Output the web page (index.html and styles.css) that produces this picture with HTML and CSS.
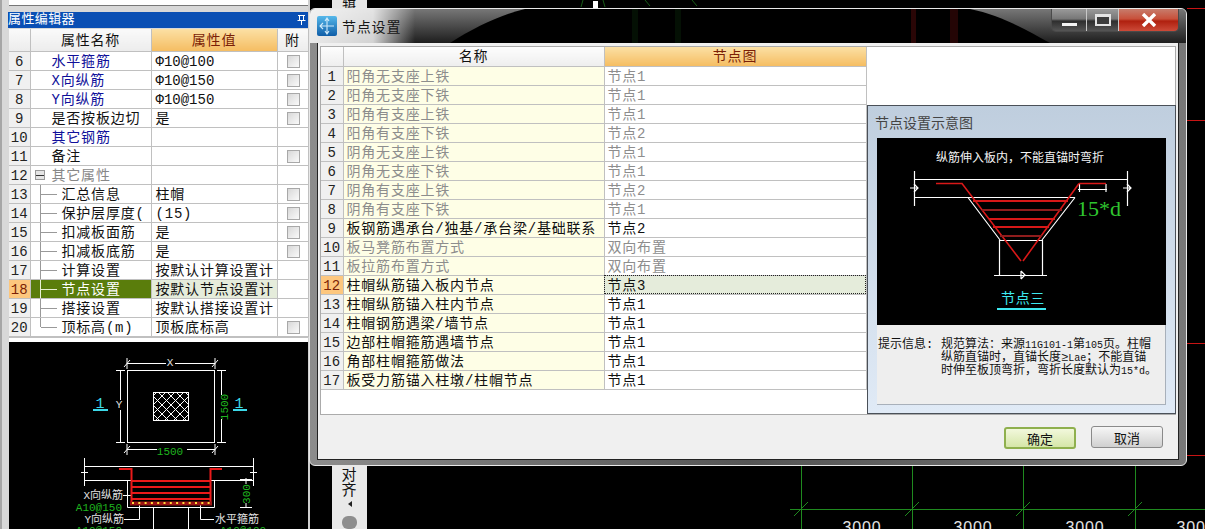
FILE: index.html
```html
<!DOCTYPE html>
<html lang="zh-CN">
<head>
    <meta charset="UTF-8">
    <title>节点设置</title>
    <link rel="stylesheet" href="styles.css">
</head>
<body>
    <!-- CAD canvas behind everything -->
    <svg class="canvas" width="1205" height="529" viewBox="0 0 1205 529">
        <g stroke="#1f8a1f" fill="none">
            <path d="M801.5 466V529M912.5 466V529M1023.5 466V529M1135.5 466V529M790 509.5H1205"/>
            <path d="M794 516L808 502M905 516L919 502M1016 516L1030 502M1128 516L1142 502"/>
            <path d="M583 0L581 7M603 0L605 7M645 0L650 6M692 0L697 6" stroke="#175c17"/>
        </g>
        <g stroke="#c81414">
            <path d="M1187 8.5H1205M1187 120.5H1205M1187 343.5H1205M1187 455.5H1205"/>
        </g>
        <g class="canvas-dim">
            <text x="862" y="533">3000</text>
            <text x="973" y="533">3000</text>
            <text x="1085" y="533">3000</text>
            <text x="1196" y="533">3000</text>
        </g>
        <rect x="593" y="1" width="5" height="7" fill="#fff"/>
    </svg>

    <div class="toolbar-top">辑</div>
    <div class="toolbar-bottom">
        <span class="toolbar-text">对<br>齐</span>
        <span class="toolbar-arrow"></span>
        <span class="toolbar-blob"></span>
    </div>

    <div class="left-panel">
        <div class="top-strip"></div>
        <div class="prop-title">
            <span>属性编辑器</span>
            <svg class="pin" width="9" height="11" viewBox="0 0 9 11">
                <path d="M1 1.5H8M2.5 1.5V6.5H6.5V1.5M0.5 6.5H8.5M4.5 6.5V11" stroke="#fff" fill="none"/>
            </svg>
        </div>
        <table class="prop-table">
            <colgroup>
                <col class="c-num"><col class="c-name"><col class="c-val"><col class="c-att">
            </colgroup>
            <tr class="head">
                <th></th><th>属性名称</th><th class="hot">属性值</th><th>附</th>
            </tr>
            <tr><td class="num">6</td><td class="name blue">水平箍筋</td><td class="val"><span class="mono">Φ10@100</span></td><td><i class="chk"></i></td></tr>
            <tr><td class="num">7</td><td class="name blue">X向纵筋</td><td class="val"><span class="mono">Φ10@150</span></td><td><i class="chk"></i></td></tr>
            <tr><td class="num">8</td><td class="name blue">Y向纵筋</td><td class="val"><span class="mono">Φ10@150</span></td><td><i class="chk"></i></td></tr>
            <tr><td class="num">9</td><td class="name">是否按板边切</td><td class="val">是</td><td><i class="chk"></i></td></tr>
            <tr><td class="num">10</td><td class="name blue">其它钢筋</td><td class="val"></td><td></td></tr>
            <tr><td class="num">11</td><td class="name">备注</td><td class="val"></td><td><i class="chk"></i></td></tr>
            <tr><td class="num">12</td><td class="name group"><i class="minus"></i>其它属性</td><td class="val"></td><td></td></tr>
            <tr><td class="num">13</td><td class="name sub">汇总信息</td><td class="val">柱帽</td><td><i class="chk"></i></td></tr>
            <tr><td class="num">14</td><td class="name sub">保护层厚度(</td><td class="val">(15)</td><td><i class="chk"></i></td></tr>
            <tr><td class="num">15</td><td class="name sub">扣减板面筋</td><td class="val">是</td><td><i class="chk"></i></td></tr>
            <tr><td class="num">16</td><td class="name sub">扣减板底筋</td><td class="val">是</td><td><i class="chk"></i></td></tr>
            <tr><td class="num">17</td><td class="name sub">计算设置</td><td class="val">按默认计算设置计</td><td></td></tr>
            <tr class="sel"><td class="num">18</td><td class="name sub">节点设置</td><td class="val">按默认节点设置计</td><td></td></tr>
            <tr><td class="num">19</td><td class="name sub">搭接设置</td><td class="val">按默认搭接设置计</td><td></td></tr>
            <tr class="last"><td class="num">20</td><td class="name sub">顶标高(m)</td><td class="val">顶板底标高</td><td><i class="chk"></i></td></tr>
        </table>
        <div class="prop-gap"></div>

        <svg class="prop-drawing" width="299" height="187" viewBox="9 342 299 187">
            <rect x="9" y="342" width="299" height="187" fill="#000"/>
            <defs>
                <pattern id="hatch" width="9" height="9" patternUnits="userSpaceOnUse">
                    <path d="M0 0L9 9M9 0L0 9" stroke="#fff" stroke-width="1" fill="none"/>
                </pattern>
            </defs>
            <g stroke="#fff" fill="none">
                <rect x="127.5" y="370.5" width="87" height="72"/>
                <rect x="153.5" y="392.5" width="35" height="28" fill="url(#hatch)"/>
                <path d="M127 363.5H166M175 363.5H215M127 358V369M215 358V369M124 367L130 360M212 367L218 360"/>
                <path d="M120.5 370V400M120.5 410V442M116 370.5H125M116 442.5H125"/>
                <path d="M221.5 370V395M221.5 419V442M217 370.5H226M217 442.5H226"/>
                <path d="M127 449.5H157M187 449.5H215M127 444V455M215 444V455M124 453L130 446M212 453L218 446"/>
                <path d="M84.5 458V486M253.5 458V486M84 466.5H254M84 480.5H254M81 472.5H88M250 472.5H257"/>
                <path d="M127.5 480V507.5H214.5V480M153.5 507V529M188.5 507V529"/>
                <path d="M123 495.5H131M124 519.5H139.5V503M200.5 503V519.5H214"/>
                <path d="M246 478V484M246 503V508M240 507.5H252M240 479.5H252"/>
            </g>
            <g stroke="#ea1a1a" fill="none" stroke-width="2">
                <path d="M119 469H131.5V503M222 469H210.5V503"/>
                <path d="M132 481H210M132 487H210M132 493H210M132 499H210"/>
            </g>
            <path d="M130 503.5H212" stroke="#9c1414" stroke-width="4"/>
            <path d="M132 503H211" stroke="#ffd93a" stroke-width="2" stroke-dasharray="2 4.3"/>
            <g class="dwg-white">
                <text x="170" y="366" text-anchor="middle">X</text>
                <text x="119" y="408" text-anchor="middle">Y</text>
                <text x="123" y="499" text-anchor="end">X向纵筋</text>
                <text x="124" y="523" text-anchor="end">Y向纵筋</text>
                <text x="215" y="523">水平箍筋</text>
            </g>
            <g class="dwg-green">
                <text x="170" y="455" text-anchor="middle">1500</text>
                <text x="228" y="407" text-anchor="middle" transform="rotate(-90 228 407)">1500</text>
                <text x="122" y="511" text-anchor="end">A10@150</text>
                <text x="122" y="534" text-anchor="end">A10@150</text>
                <text x="220" y="534">A10@100</text>
                <text x="250" y="494" text-anchor="middle" transform="rotate(-90 250 494)">300</text>
            </g>
            <g class="dwg-cyan">
                <text x="100" y="408" text-anchor="middle">1</text>
                <text x="239" y="408" text-anchor="middle">1</text>
            </g>
            <path d="M93 410H108M233 410H247" stroke="#3cd8e8" stroke-width="2"/>
        </svg>
    </div>

    <div class="dialog">
        <div class="title-bar">
            <svg class="title-bg" width="878" height="34" viewBox="0 0 878 34">
                <defs>
                    <linearGradient id="glass" x1="0" y1="0" x2="0" y2="1">
                        <stop offset="0" stop-color="#777"/>
                        <stop offset="1" stop-color="#1e1e1e"/>
                    </linearGradient>
                    <linearGradient id="glow" x1="0" y1="0" x2="1" y2="0">
                        <stop offset="0" stop-color="#fff" stop-opacity=".9"/>
                        <stop offset=".6" stop-color="#fff" stop-opacity=".8"/>
                        <stop offset="1" stop-color="#fff" stop-opacity="0"/>
                    </linearGradient>
                </defs>
                <rect width="878" height="34" fill="url(#glass)"/>
                <path d="M140 34C165 18 190 6 215 0H660C690 6 715 20 740 34Z" fill="#000"/>
                <rect x="0" width="105" height="34" fill="url(#glow)"/>
                <rect x="601" width="5" height="34" fill="#2a0606"/>
                <rect x="640" width="8" height="34" fill="#240505"/>
                <rect x="322" width="6" height="34" fill="#041004"/>
                <rect x="365" width="6" height="34" fill="#041004"/>
            </svg>
            <svg class="title-icon" width="20" height="20" viewBox="0 0 20 20">
                <defs>
                    <linearGradient id="iconfill" x1="0" y1="0" x2="0" y2="1">
                        <stop offset="0" stop-color="#55b8ea"/>
                        <stop offset="1" stop-color="#0f5ea8"/>
                    </linearGradient>
                </defs>
                <rect width="20" height="20" rx="2" fill="url(#iconfill)"/>
                <path d="M10 2V18M3 10H17M6 7L3 10L6 13M8 5L10 2L12 5M8 15L10 18L12 15" stroke="#cfeafa" stroke-width="1.1" fill="none"/>
            </svg>
            <span class="title-text">节点设置</span>
            <div class="win-btns">
                <span class="win-btn btn-min"><i></i></span>
                <span class="win-btn btn-max"><i></i></span>
                <span class="win-btn btn-close">
                    <svg width="18" height="14" viewBox="0 0 18 14"><path d="M3 1L15 13M15 1L3 13" stroke="#fff" stroke-width="3.4"/></svg>
                </span>
            </div>
        </div>

        <div class="dialog-body">
            <div class="dialog-main">
                <table class="node-table">
                    <colgroup>
                        <col class="n-num"><col class="n-name"><col class="n-val">
                    </colgroup>
                    <tr class="head"><th></th><th>名称</th><th class="hot">节点图</th></tr>
                    <tr class="off"><td class="num">1</td><td class="name">阳角无支座上铁</td><td>节点1</td></tr>
                    <tr class="off"><td class="num">2</td><td class="name">阳角无支座下铁</td><td>节点1</td></tr>
                    <tr class="off"><td class="num">3</td><td class="name">阳角有支座上铁</td><td>节点1</td></tr>
                    <tr class="off"><td class="num">4</td><td class="name">阳角有支座下铁</td><td>节点2</td></tr>
                    <tr class="off"><td class="num">5</td><td class="name">阴角无支座上铁</td><td>节点1</td></tr>
                    <tr class="off"><td class="num">6</td><td class="name">阴角无支座下铁</td><td>节点1</td></tr>
                    <tr class="off"><td class="num">7</td><td class="name">阴角有支座上铁</td><td>节点2</td></tr>
                    <tr class="off"><td class="num">8</td><td class="name">阴角有支座下铁</td><td>节点1</td></tr>
                    <tr><td class="num">9</td><td class="name">板钢筋遇承台/独基/承台梁/基础联系</td><td>节点2</td></tr>
                    <tr class="off"><td class="num">10</td><td class="name">板马凳筋布置方式</td><td>双向布置</td></tr>
                    <tr class="off"><td class="num">11</td><td class="name">板拉筋布置方式</td><td>双向布置</td></tr>
                    <tr class="sel"><td class="num">12</td><td class="name">柱帽纵筋锚入板内节点</td><td class="focus">节点3</td></tr>
                    <tr><td class="num">13</td><td class="name">柱帽纵筋锚入柱内节点</td><td>节点1</td></tr>
                    <tr><td class="num">14</td><td class="name">柱帽钢筋遇梁/墙节点</td><td>节点1</td></tr>
                    <tr><td class="num">15</td><td class="name">边部柱帽箍筋遇墙节点</td><td>节点1</td></tr>
                    <tr><td class="num">16</td><td class="name">角部柱帽箍筋做法</td><td>节点1</td></tr>
                    <tr><td class="num">17</td><td class="name">板受力筋锚入柱墩/柱帽节点</td><td>节点1</td></tr>
                </table>

                <div class="preview">
                    <div class="preview-title">节点设置示意图</div>
                    <svg class="preview-img" width="289" height="187" viewBox="877 138 289 187">
                        <rect x="877" y="138" width="289" height="187" fill="#000"/>
                        <text class="pv-caption" x="1020" y="162" text-anchor="middle">纵筋伸入板内，不能直锚时弯折</text>
                        <g stroke="#fff" fill="none" stroke-width="1.2">
                            <path d="M914 179.5H1127M914 197.5H1075M914.5 171V206M1127.5 171V206"/>
                            <path d="M910 188H918M914 184L918 188L914 192M1123 188H1131M1127 184L1131 188L1127 192"/>
                            <path d="M968 197.5L1000 240M1075 197.5L1042 240M999.5 240.5H1042.5M999.5 240V275M1042.5 240V275"/>
                            <path d="M994 275.5H1047M1021 271V279M1021 271L1025 275L1021 279"/>
                            <path d="M1078 189.5H1107M1079.5 184V192M1106 184V192"/>
                        </g>
                        <path d="M936 183.5H962L1021 261M1079 183.5H1106M1079 183.5L1023 261" stroke="#d81818" stroke-width="1.6" fill="none"/>
                        <g stroke="#d81818" stroke-width="2.2">
                            <path d="M973 201H1068M989 219H1055M993 227H1049"/>
                        </g>
                        <g stroke="#8f1d1d" stroke-width="2.2">
                            <path d="M982 210H1062M1000 236H1042"/>
                        </g>
                        <text class="pv-num" x="1077" y="216">15*d</text>
                        <text class="pv-label" x="1023" y="303" text-anchor="middle">节点三</text>
                        <path d="M997 309H1046" stroke="#3ee8f0" stroke-width="2"/>
                    </svg>
                    <div class="preview-info">
                        <span class="info-label">提示信息:</span>
                        <p class="info-text">规范算法：来源<span class="latin">11G101-1</span>第<span class="latin">105</span>页。柱帽<br>纵筋直锚时，直锚长度≥<span class="latin">Lae</span>；不能直锚<br>时伸至板顶弯折，弯折长度默认为<span class="latin">15*d</span>。</p>
                    </div>
                </div>
            </div>
            <div class="dialog-footer">
                <button class="btn btn-ok">确定</button>
                <button class="btn">取消</button>
            </div>
        </div>
    </div>
</body>
</html>
```

FILE: styles.css
```css
* {
    box-sizing: border-box;
}

html, body {
    margin: 0;
    padding: 0;
}

body {
    position: relative;
    width: 1205px;
    height: 529px;
    overflow: hidden;
    background-color: #000;
    font-family: "Liberation Mono", "Noto Sans CJK SC", monospace;
    font-size: 14px;
    letter-spacing: 0.8px;
    color: #111;
}

.canvas {
    position: absolute;
    left: 0;
    top: 0;
}

.canvas-dim {
    fill: #e4e4e4;
    font-family: "Liberation Sans", sans-serif;
    font-size: 16px;
    text-anchor: middle;
}

.toolbar-top {
    position: absolute;
    left: 332px;
    top: -9px;
    width: 35px;
    height: 18px;
    background-color: #e6e6e6;
    text-align: center;
}

.toolbar-bottom {
    position: absolute;
    left: 332px;
    top: 466px;
    width: 35px;
    height: 63px;
    display: flex;
    flex-direction: column;
    align-items: center;
    background-color: #e9e9e9;
    font-size: 15px;
    line-height: 15px;
}

.toolbar-text {
    padding-top: 3px;
}

.toolbar-arrow {
    width: 0;
    height: 0;
    margin: 2px 0 9px;
    border-top: 3px solid transparent;
    border-bottom: 3px solid transparent;
    border-right: 4px solid #222;
}

.toolbar-blob {
    width: 15px;
    height: 14px;
    border-radius: 6px;
    background-color: #8e8e8e;
}

/* left property panel */
.left-panel {
    position: absolute;
    left: 0;
    top: 0;
    width: 310px;
    height: 529px;
    display: flex;
    flex-direction: column;
    padding-left: 6px;
    background-color: #d8d8d8;
    border-left: 2px solid #a6a6a6;
    border-right: 2px solid #cfcfcf;
}

.top-strip {
    height: 6px;
    margin-bottom: 6px;
    margin-left: 1px;
    background-color: #fff;
    border-bottom: 1px solid #777;
}

.prop-title {
    display: flex;
    justify-content: space-between;
    align-items: center;
    flex-shrink: 0;
    height: 16px;
    padding: 0 2px 0 0;
    background-color: #0a4fb4;
    color: #fff;
    font-size: 13px;
    line-height: 15px;
    letter-spacing: 0.4px;
}

.prop-table,
.node-table {
    border-collapse: collapse;
    table-layout: fixed;
    background-color: #fff;
}

.prop-table {
    width: 299px;
    margin-top: 1px;
    margin-left: 1px;
    flex-shrink: 0;
}

.c-num { width: 21px; }
.c-name { width: 121px; }
.c-val { width: 126px; }
.c-att { width: 31px; }

.prop-table td,
.prop-table th,
.node-table td,
.node-table th {
    height: 19px;
    padding: 2px 0 0;
    border-bottom: 1px solid #c0c0c0;
    border-right: 1px solid #c0c0c0;
    font-weight: normal;
    line-height: 16px;
    white-space: nowrap;
    overflow: hidden;
    text-align: left;
}

.prop-table .head th {
    height: 23px;
    text-align: center;
    background: linear-gradient(#fafafa, #ececec);
}

.node-table .head th {
    text-align: center;
    background: linear-gradient(#fdfdfd, #eeeeee);
}

.prop-table .head th.hot,
.node-table .head th.hot {
    background: linear-gradient(#fbe0a4, #f5bd62);
    color: #7b1f06;
}

.prop-table .num,
.node-table .num {
    text-align: center;
    background-color: #f0f0f0;
    letter-spacing: 0;
    color: #222;
}

.prop-table .name {
    position: relative;
    padding-left: 21px;
}

.prop-table .val {
    padding-left: 4px;
}

.blue {
    color: #10109a;
}

.mono {
    letter-spacing: 0;
}

.prop-table .group {
    color: #888;
}

.minus {
    position: absolute;
    left: 4px;
    top: 4px;
    width: 10px;
    height: 10px;
    border: 1px solid #999;
    background: linear-gradient(to bottom, #e4e4e4 4px, #333 4px, #333 5px, #e4e4e4 5px);
}

/* tree connectors in the name column */
.prop-table .sub {
    padding-left: 31px;
}

.prop-table .sub::before {
    content: "";
    position: absolute;
    left: 9px;
    top: 0;
    bottom: 0;
    border-left: 1px solid #999;
}

.prop-table .sub::after {
    content: "";
    position: absolute;
    left: 10px;
    top: 9px;
    width: 16px;
    border-top: 1px solid #999;
}

.prop-table .last .sub::before {
    bottom: 9px;
}

.prop-table .sel .num,
.node-table .sel .num {
    background-color: #fdc77e;
    color: #7b1f06;
}

.prop-table .sel .name {
    background-color: #5a7d0c;
    color: #fff;
}

.prop-table .sel .sub::before,
.prop-table .sel .sub::after {
    border-color: #e8f0d4;
}

.prop-table .sel .val {
    background-color: #e5ecdb;
}

.chk {
    display: block;
    width: 13px;
    height: 13px;
    margin-left: 9px;
    margin-top: -1px;
    border: 1px solid #a8a8a8;
    background: linear-gradient(135deg, #d8d8d8, #fafafa);
}

.prop-gap {
    flex-shrink: 0;
    height: 5px;
    margin-left: 1px;
    background-color: #fff;
    border-top: 1px solid #c0c0c0;
}

.prop-drawing {
    display: block;
    flex-shrink: 0;
    margin-left: 1px;
}

.dwg-white text,
.dwg-green text,
.dwg-cyan text {
    font-family: "Liberation Mono", "Noto Sans CJK SC", monospace;
    letter-spacing: 0;
}

.dwg-white {
    fill: #e0e0e0;
    font-size: 11px;
}

.dwg-green {
    fill: #1fb51f;
    font-size: 11px;
}

.dwg-cyan {
    fill: #3cd8e8;
    font-size: 15px;
}

/* node settings dialog */
.dialog {
    position: absolute;
    left: 309px;
    top: 8px;
    width: 878px;
    height: 458px;
    display: flex;
    flex-direction: column;
    padding: 0 7px 5px;
    border: 1px solid #e8e8e8;
    border-radius: 6px;
    overflow: hidden;
    background: linear-gradient(to right, #8c8c8c, #555 50%, #777);
}

.title-bar {
    position: relative;
    display: flex;
    align-items: center;
    flex-shrink: 0;
    height: 33px;
    margin: 0 -7px;
    padding-left: 7px;
}

.title-bg {
    position: absolute;
    left: 0;
    top: 0;
}

.title-icon {
    position: relative;
    margin-right: 5px;
}

.title-text {
    position: relative;
    font-size: 14px;
    color: #161616;
}

.win-btns {
    position: relative;
    display: flex;
    align-self: flex-start;
    height: 23px;
    margin-left: auto;
    margin-right: 7px;
    border: 1px solid #4a4a4a;
    border-top: 0;
    border-radius: 0 0 5px 5px;
    overflow: hidden;
}

.win-btn {
    display: flex;
    align-items: center;
    justify-content: center;
    height: 100%;
    border-right: 1px solid #c8c8c8;
    background: linear-gradient(#9a9a9a, #777 45%, #2e2e2e 55%, #555);
}

.btn-min {
    width: 35px;
}

.btn-max {
    width: 32px;
}

.btn-close {
    width: 59px;
    border-right: 0;
    background: linear-gradient(#c77c6c, #c8503a 45%, #b0200f 55%, #cc4a38);
}

.btn-min i {
    width: 15px;
    height: 3px;
    margin-top: 8px;
    background-color: #f4f4f4;
}

.btn-max i {
    width: 16px;
    height: 12px;
    border: 2px solid #e4e4e4;
    border-top-width: 3px;
    background-color: #3c3c3c;
}

.dialog-body {
    flex: 1;
    display: flex;
    flex-direction: column;
    padding: 3px 2px;
    background-color: #f0f0f0;
    border: 1px solid #222;
}

.dialog-main {
    position: relative;
    height: 369px;
    background-color: #fff;
    border: 1px solid #ababab;
}

.node-table {
    width: 545px;
}

.n-num { width: 22px; }
.n-name { width: 261px; }
.n-val { width: 262px; }

.node-table .name {
    padding-left: 3px;
    background-color: #fefee6;
}

.node-table td:last-child {
    padding-left: 3px;
}

.node-table .off td:not(.num) {
    color: #8d8d8d;
}

.node-table .focus {
    background-color: #e5ecdb;
    outline: 1px dotted #222;
    outline-offset: -1px;
}

/* preview panel */
.preview {
    position: absolute;
    left: 546px;
    top: 58px;
    width: 309px;
    height: 309px;
    display: flex;
    flex-direction: column;
    padding: 0 9px 8px;
    background: linear-gradient(#bfcede, #e0eaf6);
    border: 1px solid #4a5058;
}

.preview-title {
    flex-shrink: 0;
    height: 32px;
    padding-top: 10px;
    margin-left: -2px;
    font-size: 14px;
    line-height: 17px;
    letter-spacing: 0;
    color: #444;
}

.preview-img {
    display: block;
    flex-shrink: 0;
}

.pv-caption {
    fill: #f4f4f4;
    font-size: 12px;
    letter-spacing: 0;
}

.pv-num {
    fill: #2fc42f;
    font-family: "Liberation Serif", serif;
    font-size: 22px;
    letter-spacing: 0;
}

.pv-label {
    fill: #3ee8f0;
    font-size: 14px;
    letter-spacing: 0.6px;
}

.preview-info {
    flex: 1;
    display: flex;
    padding: 14px 0 0 1px;
    background-color: #eeeeee;
    border-right: 1px solid #a8b0ba;
    border-bottom: 1px solid #a8b0ba;
    line-height: 12px;
    letter-spacing: 0;
}

.info-label {
    flex-shrink: 0;
    width: 63px;
    font-size: 12px;
}

.info-text {
    margin: 0;
    white-space: nowrap;
    font-size: 12px;
}

.latin {
    font-size: 10px;
}

.dialog-footer {
    flex: 1;
    display: flex;
    justify-content: flex-end;
    align-items: flex-start;
    gap: 15px;
    padding: 11px 13px 0 0;
}

.btn {
    width: 72px;
    height: 22px;
    padding: 0;
    background: linear-gradient(#f6f6f6, #d0d0d0);
    border: 1px solid #8a8a8a;
    border-radius: 3px;
    font-family: "Noto Sans CJK SC", sans-serif;
    font-size: 13px;
    color: #111;
}

.btn-ok {
    margin-top: 1px;
    background: linear-gradient(#f2f8dc, #d5e6a8);
    border: 2px solid #8fb04e;
}
```
